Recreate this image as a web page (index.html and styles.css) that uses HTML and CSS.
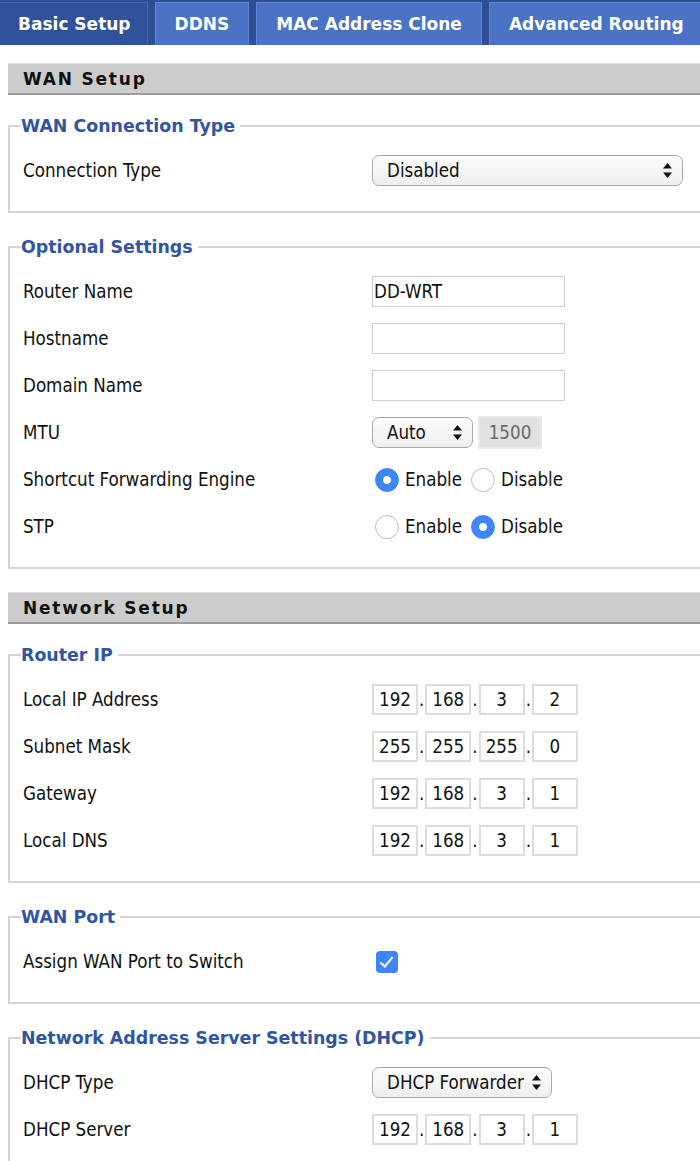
FILE: index.html
```html
<!DOCTYPE html>
<html lang="en">
<head>
  <meta charset="UTF-8" />
  <title>Setup</title>
  <link rel="stylesheet" href="styles.css">
</head>
<body>
  <div class="page">
    <div class="tabs">
      <div class="tab active">Basic Setup</div>
      <div class="tab">DDNS</div>
      <div class="tab">MAC Address Clone</div>
      <div class="tab">Advanced Routing</div>
    </div>

    <h2 class="section-title first">WAN Setup</h2>

    <fieldset>
      <legend>WAN Connection Type</legend>
      <div class="row">
        <label>Connection Type</label>
        <div class="field">
          <span class="select-wrap wide">
            <select><option>Disabled</option></select>
            <svg class="arrows" width="9" height="15" viewBox="0 0 9 15"><path d="M4.5 0 L9 5.5 L0 5.5 Z M0 9.5 L9 9.5 L4.5 15 Z" fill="#111"/></svg>
          </span>
        </div>
      </div>
    </fieldset>

    <fieldset>
      <legend>Optional Settings</legend>
      <div class="row">
        <label>Router Name</label>
        <div class="field"><input class="text" type="text" value="DD-WRT"></div>
      </div>
      <div class="row">
        <label>Hostname</label>
        <div class="field"><input class="text" type="text" value=""></div>
      </div>
      <div class="row">
        <label>Domain Name</label>
        <div class="field"><input class="text" type="text" value=""></div>
      </div>
      <div class="row">
        <label>MTU</label>
        <div class="field">
          <span class="select-wrap mtu">
            <select><option>Auto</option></select>
            <svg class="arrows" width="9" height="15" viewBox="0 0 9 15"><path d="M4.5 0 L9 5.5 L0 5.5 Z M0 9.5 L9 9.5 L4.5 15 Z" fill="#111"/></svg>
          </span>
          <input class="mtu-value" type="text" value="1500" disabled>
        </div>
      </div>
      <div class="row">
        <label>Shortcut Forwarding Engine</label>
        <div class="field">
          <input type="radio" name="sfe" checked><span class="opt">Enable</span>
          <input type="radio" name="sfe"><span class="opt">Disable</span>
        </div>
      </div>
      <div class="row">
        <label>STP</label>
        <div class="field">
          <input type="radio" name="stp"><span class="opt">Enable</span>
          <input type="radio" name="stp" checked><span class="opt">Disable</span>
        </div>
      </div>
    </fieldset>

    <h2 class="section-title">Network Setup</h2>

    <fieldset>
      <legend>Router IP</legend>
      <div class="row">
        <label>Local IP Address</label>
        <div class="field ip">
          <input value="192">.<input value="168">.<input value="3">.<input value="2">
        </div>
      </div>
      <div class="row">
        <label>Subnet Mask</label>
        <div class="field ip">
          <input value="255">.<input value="255">.<input value="255">.<input value="0">
        </div>
      </div>
      <div class="row">
        <label>Gateway</label>
        <div class="field ip">
          <input value="192">.<input value="168">.<input value="3">.<input value="1">
        </div>
      </div>
      <div class="row">
        <label>Local DNS</label>
        <div class="field ip">
          <input value="192">.<input value="168">.<input value="3">.<input value="1">
        </div>
      </div>
    </fieldset>

    <fieldset>
      <legend>WAN Port</legend>
      <div class="row">
        <label>Assign WAN Port to Switch</label>
        <div class="field"><input class="check" type="checkbox" checked></div>
      </div>
    </fieldset>

    <fieldset>
      <legend>Network Address Server Settings (DHCP)</legend>
      <div class="row">
        <label>DHCP Type</label>
        <div class="field">
          <span class="select-wrap dhcp">
            <select><option>DHCP Forwarder</option></select>
            <svg class="arrows" width="9" height="15" viewBox="0 0 9 15"><path d="M4.5 0 L9 5.5 L0 5.5 Z M0 9.5 L9 9.5 L4.5 15 Z" fill="#111"/></svg>
          </span>
        </div>
      </div>
      <div class="row">
        <label>DHCP Server</label>
        <div class="field ip">
          <input value="192">.<input value="168">.<input value="3">.<input value="1">
        </div>
      </div>
    </fieldset>
  </div>
</body>
</html>
```

FILE: styles.css
```css
html, body {
  overflow-x: hidden;
}

body {
  margin: 0;
  font-family: "DejaVu Sans Condensed", "DejaVu Sans", sans-serif;
  font-size: 18.6px;
  color: #111;
  background: #fff;
}

.page {
  width: 760px;
}

.tabs {
  display: flex;
  gap: 7px;
  height: 45px;
  padding-top: 2px;
  box-sizing: border-box;
  background: #2f4f95;
}

.tab {
  display: flex;
  align-items: center;
  padding: 0 19px;
  background: #4a72c5;
  border: 1px solid #5f86d2;
  border-bottom: none;
  color: #fff;
  font-family: "DejaVu Sans", sans-serif;
  font-weight: bold;
  font-size: 17px;
  white-space: nowrap;
}

.tab.active {
  padding: 0 16px 0 18px;
  background: #30519b;
  border-color: #4165b2;
  border-left: none;
}

.section-title {
  margin: 23px 0 0 8px;
  height: 32px;
  box-sizing: border-box;
  padding-left: 15px;
  background: #cccccc;
  border-top: 1px solid #e2e2e2;
  border-bottom: 2px solid #9c9c9c;
  font-family: "DejaVu Sans", sans-serif;
  font-size: 17px;
  font-weight: bold;
  letter-spacing: 1.8px;
  line-height: 30px;
}

.section-title.first {
  margin-top: 18px;
}

.section-title + fieldset {
  margin-top: 20px;
}

fieldset {
  margin: 23px 0 0 8px;
  padding: 10px 0 17px 13px;
  border: 2px solid #d4d4d4;
  min-width: 0;
}

legend {
  padding: 0 5px 0 0;
  margin-left: -2px;
  color: #2f55a3;
  font-family: "DejaVu Sans", sans-serif;
  font-weight: bold;
  font-size: 17.4px;
  line-height: 22px;
}

.row {
  display: flex;
  align-items: center;
  height: 47px;
}

.row label {
  width: 349px;
  flex-shrink: 0;
}

.field {
  display: flex;
  align-items: center;
}

.select-wrap {
  position: relative;
  display: inline-block;
}

.select-wrap select {
  appearance: none;
  -webkit-appearance: none;
  height: 31px;
  padding: 0 0 0 14px;
  border: 1px solid #a8a8a8;
  border-radius: 7px;
  background: linear-gradient(#fdfdfd, #eeeeee);
  font-family: inherit;
  font-size: 18.6px;
  color: #111;
}

.select-wrap .arrows {
  position: absolute;
  right: 11px;
  top: 8px;
  pointer-events: none;
}

.select-wrap.wide select {
  width: 311px;
}

.select-wrap.mtu select {
  width: 101px;
}

.select-wrap.dhcp select {
  width: 180px;
}

input.text {
  width: 193px;
  height: 31px;
  box-sizing: border-box;
  padding: 0 1px;
  border: 1px solid #cfcfcf;
  font-family: inherit;
  font-size: 18.6px;
  color: #111;
}

input.mtu-value {
  margin-left: 5px;
  width: 64px;
  height: 33px;
  box-sizing: border-box;
  padding: 0;
  text-align: center;
  border: 2px solid #e9e9e9;
  background: #e1e1e1;
  color: #6a6a6a;
  font-family: inherit;
  font-size: 18.6px;
}

input[type="radio"] {
  appearance: none;
  -webkit-appearance: none;
  margin: 0 0 0 3px;
  width: 24px;
  height: 24px;
  border: 1px solid #bdbdbd;
  border-radius: 50%;
  background: #fff;
}

input[type="radio"]:checked {
  border-color: #3d86f4;
  background: radial-gradient(circle, #fff 0 3.5px, #3d86f4 4.5px);
}

.opt {
  margin: 0 6px 0 6px;
}

.ip input {
  width: 46px;
  height: 31px;
  box-sizing: border-box;
  margin: 0 1px;
  padding: 0;
  text-align: center;
  border: 2px solid #dcdcdc;
  font-family: inherit;
  font-size: 18.6px;
  color: #111;
}

.ip input:first-child {
  margin-left: 0;
}

input.check {
  appearance: none;
  -webkit-appearance: none;
  margin: 0 0 0 4px;
  width: 22px;
  height: 22px;
  border-radius: 4px;
  background: #3d86f4;
  position: relative;
}

input.check::after {
  content: "";
  position: absolute;
  left: 7px;
  top: 3px;
  width: 5px;
  height: 11px;
  border: solid #fff;
  border-width: 0 2px 2px 0;
  transform: rotate(40deg);
}
```
